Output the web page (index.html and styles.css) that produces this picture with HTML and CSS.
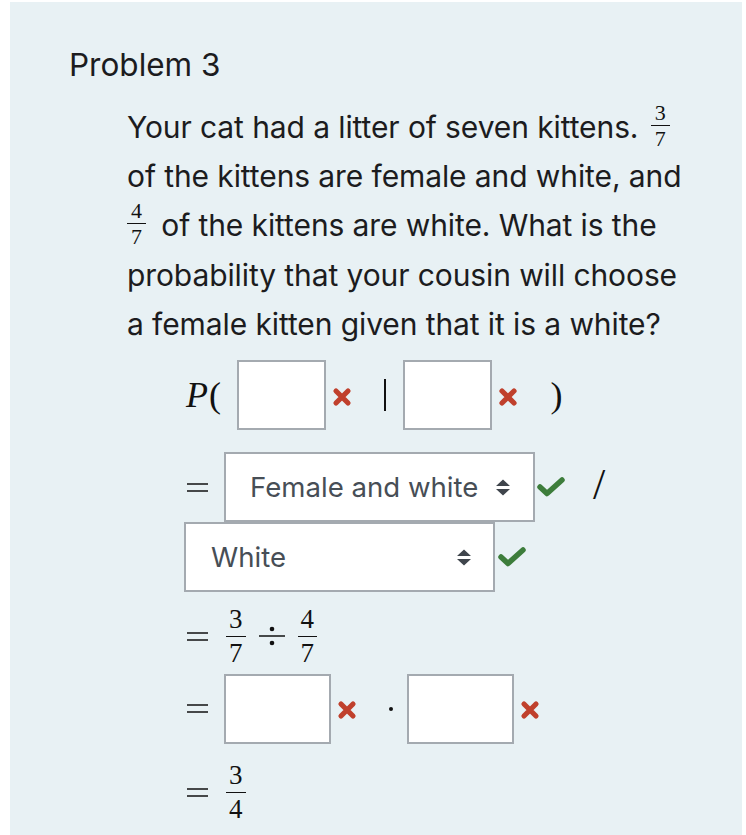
FILE: index.html
```html
<!DOCTYPE html>
<html>
<head>
<meta charset="utf-8">
<link rel="stylesheet" href="styles.css">
</head>
<body>
<div class="panel">
  <h2 class="title">Problem 3</h2>
  <p class="prob">Your cat had a litter of seven kittens. <span class="frac tf tf1"><span class="num">3</span><span class="den">7</span></span><br>of the kittens are female and white, and<br><span class="frac tf tf2"><span class="num">4</span><span class="den">7</span></span> of the kittens are white. What is the<br>probability that your cousin will choose<br>a female kitten given that it is a white?</p>

  <div class="math">
    <div class="row r1">
      <span class="pvar">P</span><span class="paren">(</span>
      <span class="box b1"></span>
      <svg class="xm" viewBox="0 0 20 20"><path d="M4 4 L16 16 M16 4 L4 16"/></svg>
      <span class="bar"></span>
      <span class="box b2"></span>
      <svg class="xm" viewBox="0 0 20 20"><path d="M4 4 L16 16 M16 4 L4 16"/></svg>
      <span class="paren rp">)</span>
    </div>

    <div class="row r2">
      <svg class="eq" viewBox="0 0 21 9"><path d="M0 1 H21 M0 8 H21"/></svg>
      <div class="sel s1"><span class="stext">Female and white</span><svg class="sort" viewBox="0 0 16 17"><path d="M8 0.5 L15 7 L1 7 Z M1 10 L15 10 L8 16.5 Z"/></svg></div>
      <svg class="ck" viewBox="0 0 28 20"><path d="M3 10 L10 16.5 L25 3"/></svg>
      <span class="slash">/</span>
    </div>

    <div class="row r3">
      <div class="sel s2"><span class="stext">White</span><svg class="sort" viewBox="0 0 16 17"><path d="M8 0.5 L15 7 L1 7 Z M1 10 L15 10 L8 16.5 Z"/></svg></div>
      <svg class="ck" viewBox="0 0 28 20"><path d="M3 10 L10 16.5 L25 3"/></svg>
    </div>

    <div class="row r4">
      <svg class="eq" viewBox="0 0 21 9"><path d="M0 1 H21 M0 8 H21"/></svg>
      <span class="frac mf"><span class="num">3</span><span class="den">7</span></span>
      <svg class="divide" viewBox="0 0 26 22"><circle cx="13" cy="4" r="2.3"/><circle cx="13" cy="18" r="2.3"/><path d="M0 11 H26"/></svg>
      <span class="frac mf"><span class="num">4</span><span class="den">7</span></span>
    </div>

    <div class="row r5">
      <svg class="eq" viewBox="0 0 21 9"><path d="M0 1 H21 M0 8 H21"/></svg>
      <span class="box b3"></span>
      <svg class="xm" viewBox="0 0 20 20"><path d="M4 4 L16 16 M16 4 L4 16"/></svg>
      <span class="dot"></span>
      <span class="box b4"></span>
      <svg class="xm" viewBox="0 0 20 20"><path d="M4 4 L16 16 M16 4 L4 16"/></svg>
    </div>

    <div class="row r6">
      <svg class="eq" viewBox="0 0 21 9"><path d="M0 1 H21 M0 8 H21"/></svg>
      <span class="frac mf"><span class="num">3</span><span class="den">4</span></span>
    </div>
  </div>
</div>
</body>
</html>
```

FILE: styles.css
```css
html, body {
  margin: 0;
  padding: 0;
  background: #ffffff;
}
body {
  width: 746px;
  height: 835px;
  overflow: hidden;
}
.panel {
  margin: 2px 4px 0 10px;
  height: 833px;
  background: #e8f1f4;
  box-sizing: border-box;
  padding-top: 43px;
  font-family: Inter, "Noto Sans", sans-serif;
  color: #1c1c1e;
}
.title {
  margin: 0 0 0 59px;
  font-weight: 400;
  font-size: 31.5px;
  line-height: 40px;
  letter-spacing: 0;
}
.prob {
  margin: 18px 0 0 117px;
  font-size: 30px;
  line-height: 49.2px;
  letter-spacing: -0.1px;
}
.frac {
  display: inline-flex;
  flex-direction: column;
  align-items: center;
  font-family: "Liberation Serif", "DejaVu Serif", serif;
  color: #111;
  vertical-align: middle;
}
.frac .num {
  border-bottom: 1.3px solid #111;
  padding: 0 1px;
  line-height: 1;
}
.frac .den {
  line-height: 1;
}
.tf {
  font-size: 22px;
  line-height: 1;
  position: relative;
  top: -4px;
  margin: -10px 4px -10px 0;
}
.tf .num { padding: 0 4px 1px; }
.tf .den { padding-top: 2px; }
.tf1 { margin-left: 4px; }
.tf2 { margin-right: 7px; }
.math {
  margin-left: 174px;
  margin-top: 11px;
  font-family: "Liberation Serif", "DejaVu Serif", serif;
  color: #111;
}
.row {
  display: flex;
  align-items: center;
}
.r1 { height: 70px; }
.r2 { height: 70px; margin-top: 22px; }
.r3 { height: 70px; margin-top: 0; }
.r4 { height: 48px; margin-top: 20px; }
.r5 { height: 69px; margin-top: 14px; }
.r6 { height: 48px; margin-top: 25px; }

.pvar {
  font-style: italic;
  font-size: 36px;
  margin-left: 2px;
}
.paren {
  font-size: 36px;
  margin-left: 1px;
}
.box {
  display: block;
  flex: none;
  box-sizing: border-box;
  height: 70px;
  background: #fff;
  border: 2px solid #a4aab0;
}
.b1 { width: 89px; margin-left: 16px; }
.b2 { width: 89px; margin-left: 0; }
.xm {
  flex: none;
  width: 20px;
  height: 20px;
  margin-left: 6px;
  margin-top: 3px;
}
.xm path {
  stroke: #c0402c;
  stroke-width: 5.2;
  stroke-linecap: round;
  fill: none;
}
.bar {
  display: block;
  flex: none;
  width: 1.5px;
  height: 32px;
  background: #111;
  margin: 0 17px 0 32px;
}
.rp { margin-left: 33px; }

.eq {
  flex: none;
  display: block;
  width: 21px;
  height: 9px;
  margin-left: 3px;
  margin-right: 16px;
}
.eq path {
  stroke: #111;
  stroke-width: 1.5;
  fill: none;
}
.sel {
  flex: none;
  display: flex;
  align-items: center;
  box-sizing: border-box;
  width: 311px;
  height: 70px;
  background: #fff;
  border: 2px solid #a4aab0;
  font-family: Inter, "Noto Sans", sans-serif;
  font-size: 27.6px;
  color: #474e56;
}
.s1 { padding-left: 24px; }
.s2 { padding-left: 25px; }
.stext { flex: 1; }
.sort {
  flex: none;
  width: 16px;
  height: 17px;
  margin-right: 22px;
  fill: #3f454c;
}
.s2 .sort { margin-right: 21px; }
.ck {
  flex: none;
  width: 28px;
  height: 20px;
  margin-left: 2px;
}
.ck path {
  stroke: #3d7d3b;
  stroke-width: 5.5;
  stroke-linecap: round;
  stroke-linejoin: round;
  fill: none;
}
.r3 .ck { margin-left: 3px; }
.slash {
  font-size: 44px;
  margin-left: 28px;
  margin-top: -6px;
}
.mf {
  font-size: 27px;
}
.mf .num { padding: 0 3px 3px; }
.mf .den { padding-top: 3px; }
.r4 .mf, .r6 .mf { margin-left: 2px; }
.divide {
  flex: none;
  width: 26px;
  height: 22px;
  margin: 0 11px 0 13px;
  fill: #111;
}
.divide path {
  stroke: #111;
  stroke-width: 1.5;
}
.b3 { width: 107px; }
.b4 { width: 107px; }
.dot {
  display: block;
  flex: none;
  width: 4px;
  height: 4px;
  border-radius: 50%;
  background: #111;
  margin: 0 14px 0 32px;
}
```
